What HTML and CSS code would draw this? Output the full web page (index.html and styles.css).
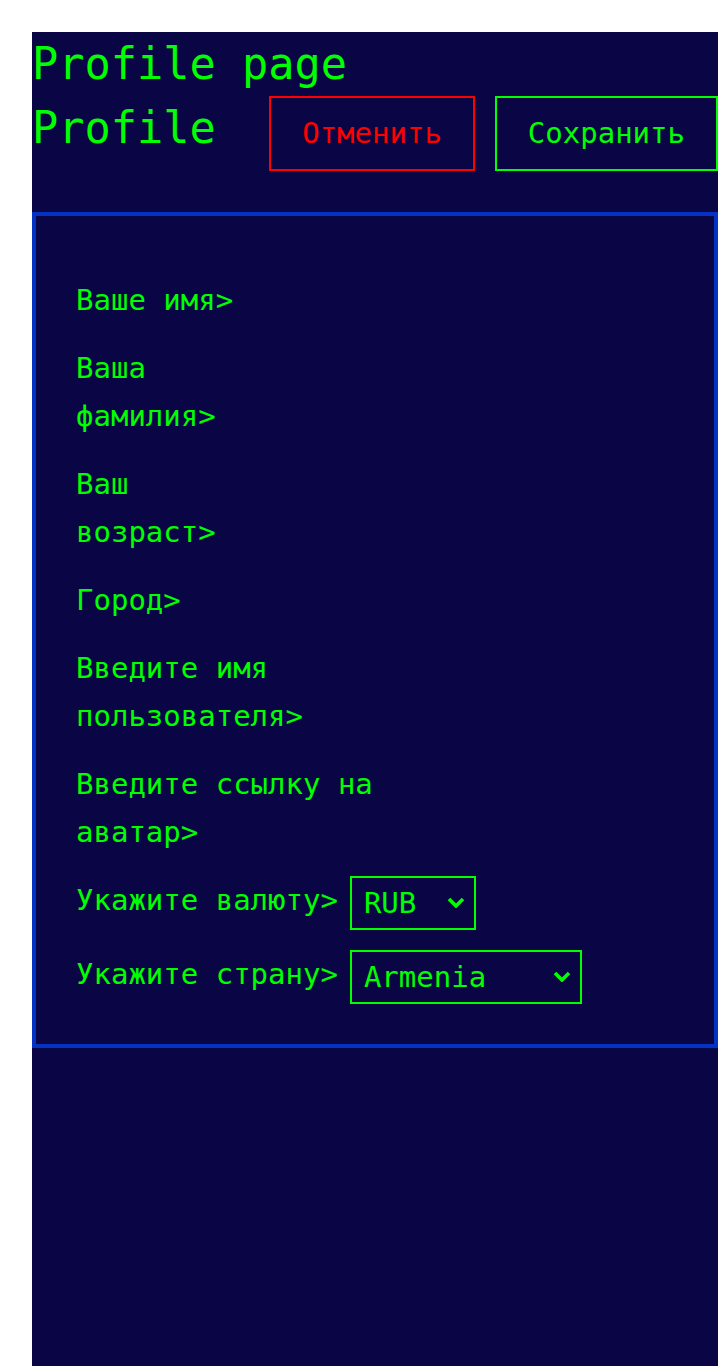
FILE: index.html
```html
<!DOCTYPE html>
<html lang="ru">
<head>
<meta charset="utf-8">
<title>Profile page</title>
<link rel="stylesheet" href="styles.css">
</head>
<body>
<div class="page">
  <header class="header">
    <h1 class="title">Profile page</h1>
    <div class="bar">
      <h2 class="subtitle">Profile</h2>
      <div class="actions">
        <button type="button" class="btn btn-cancel">Отменить</button>
        <button type="submit" class="btn btn-save">Сохранить</button>
      </div>
    </div>
  </header>
  <form class="form">
    <div class="row"><label class="label" for="f1">Ваше имя&gt;</label><input class="field" id="f1"></div>
    <div class="row"><label class="label" for="f2">Ваша<br>фамилия&gt;</label><input class="field" id="f2"></div>
    <div class="row"><label class="label" for="f3">Ваш<br>возраст&gt;</label><input class="field" id="f3"></div>
    <div class="row"><label class="label" for="f4">Город&gt;</label><input class="field" id="f4"></div>
    <div class="row"><label class="label" for="f5">Введите имя<br>пользователя&gt;</label><input class="field" id="f5"></div>
    <div class="row"><label class="label" for="f6">Введите ссылку на<br>аватар&gt;</label><input class="field" id="f6"></div>
    <div class="row">
      <label class="label" for="f7">Укажите валюту&gt;</label>
      <span class="select-wrap">
        <select class="select select-currency" id="f7">
          <option>RUB</option>
          <option>USD</option>
          <option>EUR</option>
        </select>
        <svg class="chev" viewBox="0 0 18 11" aria-hidden="true"><polyline points="2,2 9,9 16,2" fill="none" stroke="#00ff00" stroke-width="3.6"/></svg>
      </span>
    </div>
    <div class="row">
      <label class="label" for="f8">Укажите страну&gt;</label>
      <span class="select-wrap">
        <select class="select select-country" id="f8">
          <option>Armenia</option>
          <option>Russia</option>
          <option>Kazakhstan</option>
        </select>
        <svg class="chev" viewBox="0 0 18 11" aria-hidden="true"><polyline points="2,2 9,9 16,2" fill="none" stroke="#00ff00" stroke-width="3.6"/></svg>
      </span>
    </div>
  </form>
</div>
</body>
</html>
```

FILE: styles.css
```css
html, body {
  margin: 0;
}

body {
  padding: 32px 0 0 32px;
  background: #ffffff;
}

.page {
  min-height: calc(100vh - 32px);
  background: #0a0646;
  color: #00ff00;
  font-family: "DejaVu Sans Mono", monospace;
}

.title,
.subtitle {
  margin: 0;
  font-size: 43.6px;
  line-height: 64px;
  font-weight: normal;
}

.bar {
  display: flex;
  justify-content: space-between;
  align-items: baseline;
  margin-bottom: 41px;
}

.actions {
  display: flex;
  gap: 20px;
  align-items: baseline;
}

.btn {
  font-family: "DejaVu Sans Mono", monospace;
  font-size: 29px;
  line-height: 35px;
  padding: 18px 31px;
  background: transparent;
  border: 2px solid;
  border-radius: 0;
  margin: 0;
}

.btn-cancel {
  color: #ff0000;
  border-color: #ff0000;
}

.btn-save {
  color: #00ff00;
  border-color: #00ff00;
}

.form {
  border: 4px solid #0433c4;
  padding: 60px 38px 40px 40px;
  display: flex;
  flex-direction: column;
  gap: 20px;
  margin: 0;
}

.row {
  display: flex;
  align-items: flex-start;
  gap: 12px;
}

.label {
  font-size: 29px;
  line-height: 48px;
  flex: none;
}

.field {
  flex: 1;
  min-width: 0;
  height: 48px;
  margin: 0;
  padding: 0;
  border: 0;
  outline: none;
  background: transparent;
  color: #00ff00;
  font: inherit;
  font-size: 29px;
}

.select-wrap {
  position: relative;
  display: flex;
}

.select {
  appearance: none;
  -webkit-appearance: none;
  box-sizing: border-box;
  height: 54px;
  margin: 0;
  padding: 0 10px 0 12px;
  border: 2px solid #00ff00;
  border-radius: 0;
  background: transparent;
  color: #00ff00;
  font-family: "DejaVu Sans Mono", monospace;
  font-size: 29px;
}

.select option {
  background: #0a0646;
  color: #00ff00;
}

.select-currency {
  width: 126px;
}

.select-country {
  width: 232px;
}

.chev {
  position: absolute;
  right: 11px;
  top: 21px;
  width: 18px;
  height: 11px;
  pointer-events: none;
}
```
